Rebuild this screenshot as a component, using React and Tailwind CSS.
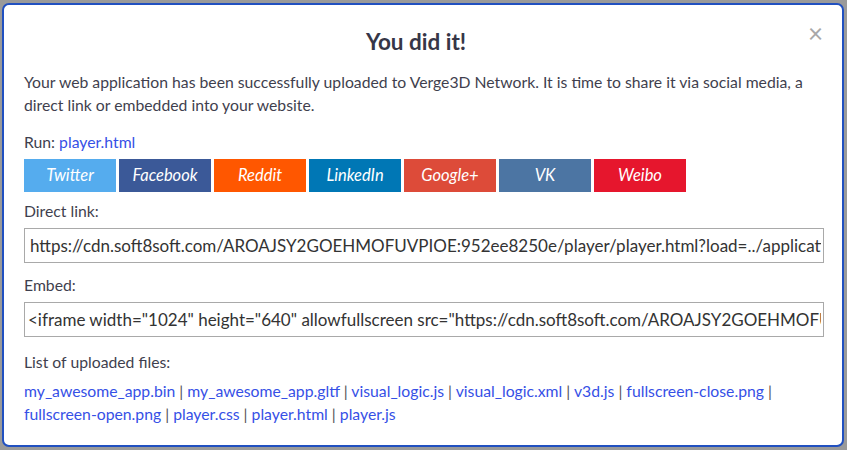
import React from "react";

const buttons = [
  { label: "Twitter", cls: "bg-[#55acee]" },
  { label: "Facebook", cls: "bg-[#3b5998]" },
  { label: "Reddit", cls: "bg-[#ff5700]" },
  { label: "LinkedIn", cls: "bg-[#0077b5]" },
  { label: "Google+", cls: "bg-[#dd4b39]" },
  { label: "VK", cls: "bg-[#4c75a3]" },
  { label: "Weibo", cls: "bg-[#e6162d]" },
];

const files = [
  "my_awesome_app.bin",
  "my_awesome_app.gltf",
  "visual_logic.js",
  "visual_logic.xml",
  "v3d.js",
  "fullscreen-close.png",
  "fullscreen-open.png",
  "player.css",
  "player.html",
  "player.js",
];

export default function App() {
  return (
    <div className="w-[847px] h-[450px] bg-[#9a9a9a] pt-[3px] pl-[2px] overflow-hidden font-['Lato','Liberation_Sans',sans-serif]">
      <div className="relative w-[842px] h-[444px] bg-white border-2 border-[#2150c0] rounded-[7px] pl-[20px] pr-[18px] pt-[23px] text-[15.75px] text-[#3f3f4e]">
        <button className="absolute right-[19px] top-[15px] text-[26px] leading-none text-[#a8a8a8]">
          ×
        </button>
        <h1 className="text-center text-[22.5px] leading-[28px] font-bold text-[#363647] pr-[16px]">
          You did it!
        </h1>
        <p className="mt-[14px] leading-[23px]">
          Your web application has been successfully uploaded to Verge3D Network. It is time to share it via social media, a direct link or embedded into your website.
        </p>
        <div className="mt-[14px] leading-[23px]">
          Run: <a className="text-[#3650e6]">player.html</a>
        </div>
        <div className="mt-[6px] flex gap-[3px]">
          {buttons.map((b) => (
            <div
              key={b.label}
              className={`${b.cls} w-[92px] h-[33px] flex items-center justify-center text-white italic text-[16.5px]`}
            >
              {b.label}
            </div>
          ))}
        </div>
        <div className="mt-[7px] leading-[23px]">Direct link:</div>
        <input
          readOnly
          value="https://cdn.soft8soft.com/AROAJSY2GOEHMOFUVPIOE:952ee8250e/player/player.html?load=../applications/my_awesome_app/my_awesome_app.gltf"
          className="mt-[6px] block w-[800px] h-[35px] border border-[#a9a9a9] pl-[5px] pr-[2px] text-[17px] text-[#333] outline-none font-['Lato','Liberation_Sans',sans-serif]"
        />
        <div className="mt-[10px] leading-[23px]">Embed:</div>
        <input
          readOnly
          value={'<iframe width="1024" height="640" allowfullscreen src="https://cdn.soft8soft.com/AROAJSY2GOEHMOFUVPIOE:952ee8250e/player/player.html"></iframe>'}
          className="mt-[6px] block w-[800px] h-[35px] border border-[#a9a9a9] pl-[3px] pr-[2px] text-[17px] text-[#333] outline-none font-['Lato','Liberation_Sans',sans-serif]"
        />
        <div className="mt-[13px] leading-[23px]">List of uploaded files:</div>
        <div className="mt-[6px] leading-[23px]">
          {files.map((f, i) => (
            <React.Fragment key={f}>
              <a className="text-[#3650e6] whitespace-nowrap">{f}</a>
              {i < files.length - 1 && <span className="text-[#555]"> | </span>}
            </React.Fragment>
          ))}
        </div>
      </div>
    </div>
  );
}
